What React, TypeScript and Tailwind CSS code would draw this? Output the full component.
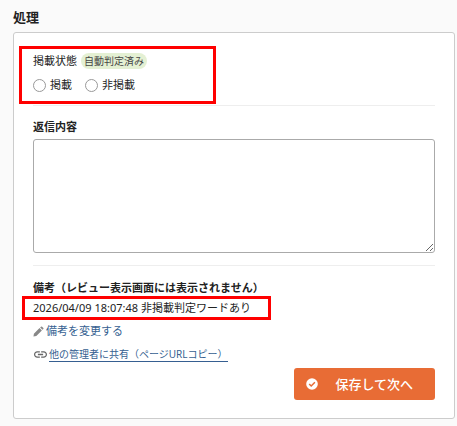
import { type ReactNode } from 'react';

function Highlight({ className }: { className: string }) {
  return <span aria-hidden="true" className={`pointer-events-none absolute border-3 border-[#ff0000] ${className}`} />;
}

function StatusOption({ value, children }: { value: string; children: ReactNode }) {
  return (
    <label className="flex items-center gap-1">
      <input
        type="radio"
        name="status"
        value={value}
        className="size-[13px] appearance-none rounded-full border border-[#999] bg-white checked:border-4 checked:border-[#e86c35]"
      />
      {children}
    </label>
  );
}

function PencilIcon() {
  return (
    <svg viewBox="0 0 12 12" className="size-[11px] shrink-0" fill="#888" aria-hidden="true">
      <path d="M1 8.4 7.1 2.3 9.7 4.9 3.6 11 .5 11.5ZM7.8 1.6 8.7.7Q9.3.2 9.9.7L11.3 2.1Q11.8 2.7 11.3 3.3L10.4 4.2Z" />
    </svg>
  );
}

function LinkIcon() {
  return (
    <svg viewBox="2 7 20 10" className="h-[7px] w-[13px] shrink-0" fill="#666" aria-hidden="true">
      <path d="M3.9 12c0-1.71 1.39-3.1 3.1-3.1h4V7H7c-2.76 0-5 2.24-5 5s2.24 5 5 5h4v-1.9H7c-1.71 0-3.1-1.39-3.1-3.1zM8 13h8v-2H8v2zm9-6h-4v1.9h4c1.71 0 3.1 1.39 3.1 3.1s-1.39 3.1-3.1 3.1h-4V17h4c2.76 0 5-2.24 5-5s-2.24-5-5-5z" />
    </svg>
  );
}

function CheckIcon() {
  return (
    <svg viewBox="0 0 12 12" className="size-3 shrink-0" aria-hidden="true">
      <circle cx="6" cy="6" r="5.8" fill="#fff" />
      <path d="m3.2 6 2 2 3.7-3.8" fill="none" stroke="#e86c35" strokeWidth="1.5" />
    </svg>
  );
}

export default function App() {
  return (
    <main className="min-h-screen bg-[#fafafa] pt-[7px] pr-[2px] pb-[6px] pl-[13px] font-['Noto_Sans','Noto_Sans_CJK_JP',sans-serif] text-[11px] leading-4 text-[#222]">
      <h1 className="text-[13px] leading-5 font-bold">処理</h1>

      <form className="mt-[5px] rounded-[3px] border border-[#ccc] bg-white px-[19px] pt-5 pb-[18px]" onSubmit={(e) => e.preventDefault()}>
        <fieldset className="relative border-b border-[#eee] pb-3">
          <Highlight className="-top-[7px] right-[219px] bottom-[1px] -left-[14px]" />
          <div className="flex items-center gap-1">
            <span id="status-label">掲載状態</span>
            <span className="rounded-full bg-[#e4f0d3] px-[3px] text-[10px] text-[#444]">自動判定済み</span>
          </div>
          <div role="radiogroup" aria-labelledby="status-label" className="mt-2 flex gap-[13px]">
            <StatusOption value="public">掲載</StatusOption>
            <StatusOption value="private">非掲載</StatusOption>
          </div>
        </fieldset>

        <div className="border-b border-[#eee] pt-3 pb-3">
          <label htmlFor="reply" className="block pt-px font-bold">返信内容</label>
          <textarea id="reply" className="mt-1 block h-[114px] w-full resize rounded-[3px] border border-[#aaa] bg-white p-2" />
        </div>

        <section className="pt-[14px]">
          <h2 className="font-bold">備考（レビュー表示画面には表示されません）</h2>
          <p className="relative mt-1 w-fit">
            2026/04/09 18:07:48 非掲載判定ワードあり
            <Highlight className="-top-1 -right-5 -bottom-1 -left-[11px]" />
          </p>
          <a href="#memo" className="mt-[7px] flex w-fit items-center gap-[2px] text-[#365f91]">
            <PencilIcon />
            備考を変更する
          </a>
          <a href="#share" className="mt-2 flex w-fit items-center gap-[2px] pl-px text-[10px] leading-[14px] text-[#365f91]">
            <LinkIcon />
            <span className="border-b border-[#365f91]">他の管理者に共有（ページURLコピー）</span>
          </a>
        </section>

        <div className="mt-[6px] flex justify-end">
          <button type="submit" className="flex h-8 items-center gap-[17px] rounded-[3px] bg-[#e86c35] pr-[22px] pl-3 text-[13px] font-medium text-white">
            <CheckIcon />
            保存して次へ
          </button>
        </div>
      </form>
    </main>
  );
}
